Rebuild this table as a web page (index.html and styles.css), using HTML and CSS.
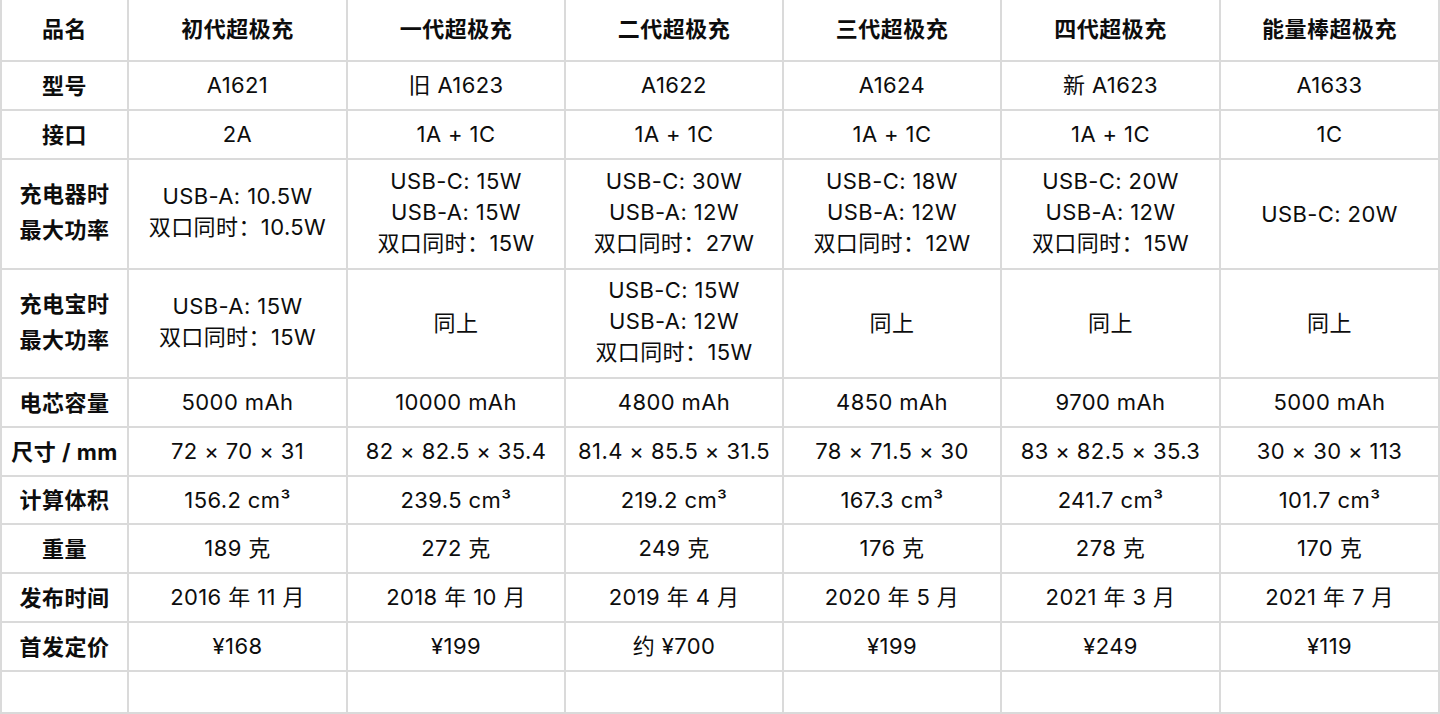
FILE: index.html
```html
<!DOCTYPE html>
<html lang="zh-CN">
<head>
<meta charset="utf-8">
<title>超极充对比</title>
<link rel="stylesheet" href="styles.css">
</head>
<body>
<table class="spec">
  <colgroup>
    <col class="c-label">
    <col class="c-a">
    <col class="c-b">
    <col class="c-b">
    <col class="c-b">
    <col class="c-a">
    <col class="c-a">
  </colgroup>
  <tbody>
    <tr class="r-head">
      <th>品名</th><th>初代超极充</th><th>一代超极充</th><th>二代超极充</th><th>三代超极充</th><th>四代超极充</th><th>能量棒超极充</th>
    </tr>
    <tr class="r-1">
      <th>型号</th><td>A1621</td><td>旧 A1623</td><td>A1622</td><td>A1624</td><td>新 A1623</td><td>A1633</td>
    </tr>
    <tr class="r-1">
      <th>接口</th><td>2A</td><td>1A + 1C</td><td>1A + 1C</td><td>1A + 1C</td><td>1A + 1C</td><td>1C</td>
    </tr>
    <tr class="r-3">
      <th class="multi">充电器时<br>最大功率</th>
      <td class="multi">USB-A: 10.5W<br>双口同时：10.5W</td>
      <td class="multi">USB-C: 15W<br>USB-A: 15W<br>双口同时：15W</td>
      <td class="multi">USB-C: 30W<br>USB-A: 12W<br>双口同时：27W</td>
      <td class="multi">USB-C: 18W<br>USB-A: 12W<br>双口同时：12W</td>
      <td class="multi">USB-C: 20W<br>USB-A: 12W<br>双口同时：15W</td>
      <td>USB-C: 20W</td>
    </tr>
    <tr class="r-3b">
      <th class="multi">充电宝时<br>最大功率</th>
      <td class="multi">USB-A: 15W<br>双口同时：15W</td>
      <td>同上</td>
      <td class="multi">USB-C: 15W<br>USB-A: 12W<br>双口同时：15W</td>
      <td>同上</td>
      <td>同上</td>
      <td>同上</td>
    </tr>
    <tr class="r-1">
      <th>电芯容量</th><td>5000 mAh</td><td>10000 mAh</td><td>4800 mAh</td><td>4850 mAh</td><td>9700 mAh</td><td>5000 mAh</td>
    </tr>
    <tr class="r-1">
      <th>尺寸 / mm</th><td>72 × 70 × 31</td><td>82 × 82.5 × 35.4</td><td>81.4 × 85.5 × 31.5</td><td>78 × 71.5 × 30</td><td>83 × 82.5 × 35.3</td><td>30 × 30 × 113</td>
    </tr>
    <tr class="r-1s">
      <th>计算体积</th><td>156.2 cm³</td><td>239.5 cm³</td><td>219.2 cm³</td><td>167.3 cm³</td><td>241.7 cm³</td><td>101.7 cm³</td>
    </tr>
    <tr class="r-1">
      <th>重量</th><td>189 克</td><td>272 克</td><td>249 克</td><td>176 克</td><td>278 克</td><td>170 克</td>
    </tr>
    <tr class="r-1">
      <th>发布时间</th><td>2016 年 11 月</td><td>2018 年 10 月</td><td>2019 年 4 月</td><td>2020 年 5 月</td><td>2021 年 3 月</td><td>2021 年 7 月</td>
    </tr>
    <tr class="r-1">
      <th>首发定价</th><td>¥168</td><td>¥199</td><td>约 ¥700</td><td>¥199</td><td>¥249</td><td>¥119</td>
    </tr>
    <tr class="r-empty">
      <th></th><td></td><td></td><td></td><td></td><td></td><td></td>
    </tr>
  </tbody>
</table>
</body>
</html>
```

FILE: styles.css
```css
html, body {
  margin: 0;
  padding: 0;
  background: #ffffff;
}

body {
  font-family: "Inter", "Noto Sans CJK SC", sans-serif;
  color: #0d0d0d;
  overflow: hidden;
}

.spec {
  border-collapse: collapse;
  table-layout: fixed;
  width: 1439px;
  font-size: 22px;
  letter-spacing: 0.4px;
  line-height: 31px;
}

.c-label { width: 127px; }
.c-a { width: 219px; }
.c-b { width: 218px; }

.spec th,
.spec td {
  border: 2px solid #dadada;
  padding: 0;
  text-align: center;
  vertical-align: middle;
  white-space: nowrap;
  font-weight: 400;
}

.spec tr:first-child th,
.spec tr:first-child td {
  border-top: none;
}

.spec th {
  font-weight: 700;
  line-height: 36px;
  letter-spacing: 0.5px;
}

.r-head th { height: 58px; padding-bottom: 2px; }
.r-1 th, .r-1 td { height: 47px; }
.r-1s th, .r-1s td { height: 46px; }
.r-3 th, .r-3 td { height: 108px; }
.r-3b th, .r-3b td { height: 107px; }
.r-empty th, .r-empty td { height: 40px; }

.spec .r-3 .multi { height: 104px; padding-bottom: 4px; }
.spec .r-3b .multi { height: 103px; padding-bottom: 4px; }
```
